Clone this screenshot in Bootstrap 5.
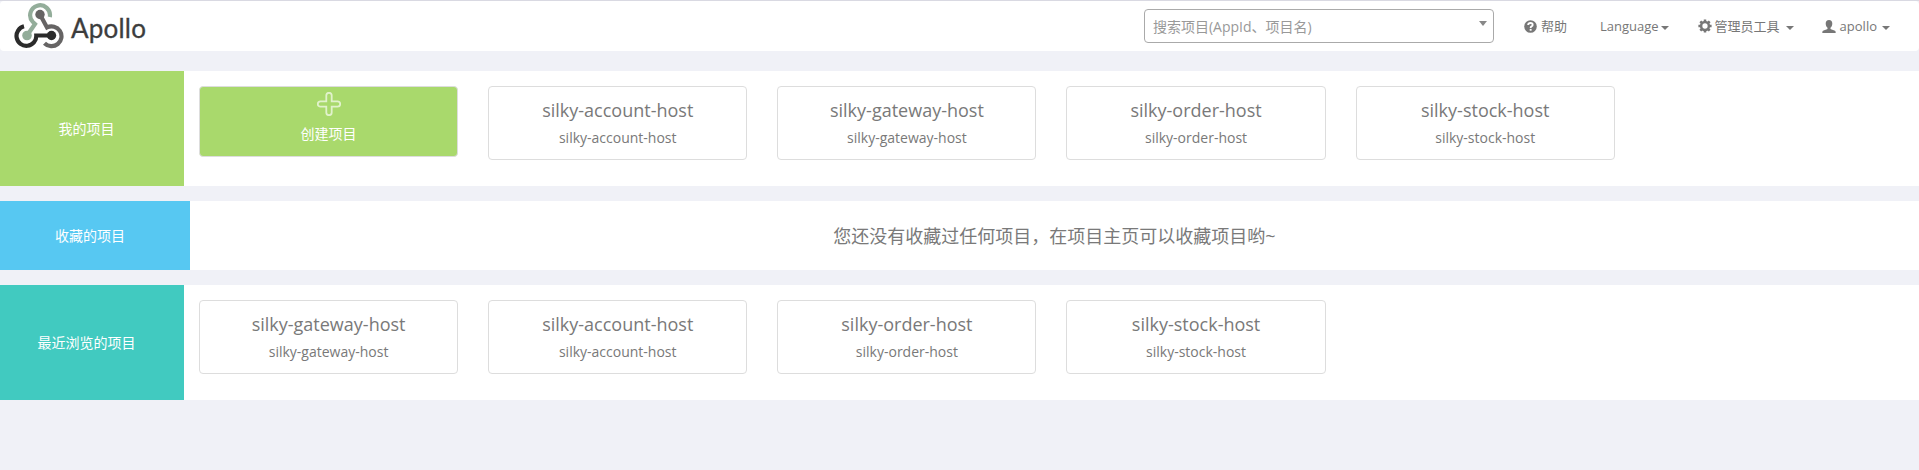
<!DOCTYPE html>
<html lang="zh-CN">
<head>
<meta charset="utf-8">
<title>Apollo</title>
<link rel="stylesheet" href="https://cdn.jsdelivr.net/npm/bootstrap@5.3.0/dist/css/bootstrap.min.css">
<style>
body{background:#f0f1f7;color:#797979;font-family:"Open Sans","Noto Sans CJK SC",sans-serif;font-size:14px;line-height:20px;overflow:hidden}
.topbar{height:51px;border-top:1px solid #d9d9e2;margin-bottom:20px}
.topbar-in{height:50px;background:#fff;border-radius:4px}
.brand-mark{width:50px;height:47px;margin-left:14px;margin-top:2px}
.brand-word{font-family:Lato,sans-serif;font-size:26px;line-height:50px;padding-top:2px;color:#3d3d3d;margin-left:7px;letter-spacing:.2px;-webkit-text-stroke:.3px #3d3d3d}
.search{width:350px;height:34px;border:1px solid #aaa;border-radius:4px;color:#999;padding:2px 6px 0 8px;margin:8px 30px 0 0}
.search-arrow{border:4px solid transparent;border-top:5px solid #888;border-bottom:0;margin-bottom:7px}
.menu{height:50px;padding-right:29px;color:#777}
.menu a{font-size:13px;color:#777;text-decoration:none;white-space:nowrap}
.menu .link-lang{margin-left:33px}
.menu .link-tools{margin-left:29px}
.menu .link-user{margin-left:28px}
.menu svg + span{margin-left:4px}
.menu .link-tools span{margin-left:3px}
.caret{display:inline-block;border:4px solid transparent;border-top-color:#777;border-bottom:0;margin:3px 0 0 6px}
.link-lang .caret{margin-left:2px}
.link-user .caret{margin-left:5px}
.panel-row{background:#fff;margin-bottom:15px;height:115px}
.panel-row.short{height:69px}
.side{width:184px;padding-right:11px;color:#fff}
.short .side{width:190px;padding-right:10px}
.green{background:#a9d96c}.blue{background:#57c8f2}.teal{background:#41cac0}
.app-grid{--bs-gutter-x:30px;margin:0}
.app-card{height:74px;border:1px solid #ddd;border-radius:4px;margin-top:15px;text-align:center}
.app-card h4{font-size:18px;line-height:20px;font-weight:400;margin:13px 0 8px}
.app-card.create{height:71px;color:#fff}
.create svg{display:block;margin:5px auto 8px}
.empty-note{font-size:18px}
</style>
<script src="https://cdn.jsdelivr.net/npm/bootstrap@5.3.0/dist/js/bootstrap.bundle.min.js"></script>
</head>
<body>
<header class="topbar"><nav class="topbar-in d-flex">
<svg class="brand-mark flex-shrink-0" viewBox="0 0 50 47" fill="none" stroke-width="4.2">
<path d="M35.800 14A9.900 9.900 0 1 0 18.800 18.900L21 21L13 32.500" stroke="#93ad9a"/><circle cx="13" cy="32.500" r="4.800" fill="#93ad9a"/>
<path d="M26 11.500L33 24.500A9.900 9.900 0 1 1 30.500 40.200" stroke="#666464"/><circle cx="26" cy="11.500" r="4.700" fill="#666464"/>
<path d="M10 23.300A9.900 9.900 0 1 0 22.300 32.500H37.500" stroke="#2b2b2b"/><circle cx="37.500" cy="32.500" r="4.700" fill="#2b2b2b"/>
</svg>
<span class="brand-word">Apollo</span>
<div class="menu d-flex ms-auto">
<div class="search d-flex align-items-center justify-content-between"><span>搜索项目(AppId、项目名)</span><i class="search-arrow"></i></div>
<a href="#" class="d-flex align-items-center"><svg width="13" height="13" viewBox="0 0 13 13"><circle cx="6.500" cy="6.500" r="6.300" fill="#777"/><path d="M4.100 5Q4.300 3 6.500 3T8.700 4.900Q8.700 5.800 7.500 6.400Q6.600 6.900 6.600 8" fill="none" stroke="#fff" stroke-width="1.800"/><path d="M5.700 8.900h1.900v1.800H5.700z" fill="#fff"/></svg><span>帮助</span></a>
<a href="#" class="link-lang d-flex align-items-center"><span>Language</span><i class="caret"></i></a>
<a href="#" class="link-tools d-flex align-items-center"><svg width="14" height="14" viewBox="0 0 14 14" fill="none" stroke="#777"><circle cx="7" cy="7" r="3.900" stroke-width="2.500"/><path d="M7 .4v2.400M7 11.200v2.400M.4 7h2.400M11.200 7h2.400M2.300 2.300L4 4M10 10l1.700 1.700M11.700 2.300L10 4M4 10l-1.700 1.700" stroke-width="2.500"/></svg><span>管理员工具</span><i class="caret"></i></a>
<a href="#" class="link-user d-flex align-items-center"><svg width="14" height="13" viewBox="0 0 14 13"><path d="M7 0C4.800 0 3.600 1.500 3.700 3.700C3.800 5.500 4.500 6.900 5.500 7.700V9C4.300 9.800 1.500 10.200.7 11Q.3 11.500.3 13H13.700Q13.700 11.500 13.300 11C12.500 10.200 9.700 9.800 8.500 9V7.700C9.500 6.900 10.200 5.500 10.300 3.700C10.400 1.500 9.200 0 7 0Z" fill="#777"/></svg><span>apollo</span><i class="caret"></i></a>
</div></nav></header>
<main>
<section class="panel-row d-flex">
<div class="side green flex-shrink-0 d-flex align-items-center justify-content-center">我的项目</div>
<div class="row app-grid flex-grow-1">
<div class="col-2"><div class="app-card create green"><svg width="24" height="24" viewBox="0 0 24 24" fill="none" stroke="#fff" stroke-opacity=".65" stroke-width="1.800"><path d="M9.300 9.300V3.500a2.700 2.700 0 0 1 5.400 0V9.300H20.500a2.700 2.700 0 0 1 0 5.400H14.700V20.500a2.700 2.700 0 0 1-5.400 0V14.700H3.500a2.700 2.700 0 0 1 0-5.400Z"/></svg>创建项目</div></div>
<div class="col-2"><div class="app-card"><h4>silky-account-host</h4>silky-account-host</div></div>
<div class="col-2"><div class="app-card"><h4>silky-gateway-host</h4>silky-gateway-host</div></div>
<div class="col-2"><div class="app-card"><h4>silky-order-host</h4>silky-order-host</div></div>
<div class="col-2"><div class="app-card"><h4>silky-stock-host</h4>silky-stock-host</div></div>
</div></section>
<section class="panel-row short d-flex">
<div class="side blue flex-shrink-0 d-flex align-items-center justify-content-center">收藏的项目</div>
<div class="empty-note flex-grow-1 d-flex align-items-center justify-content-center">您还没有收藏过任何项目，在项目主页可以收藏项目哟~</div>
</section>
<section class="panel-row d-flex">
<div class="side teal flex-shrink-0 d-flex align-items-center justify-content-center">最近浏览的项目</div>
<div class="row app-grid flex-grow-1">
<div class="col-2"><div class="app-card"><h4>silky-gateway-host</h4>silky-gateway-host</div></div>
<div class="col-2"><div class="app-card"><h4>silky-account-host</h4>silky-account-host</div></div>
<div class="col-2"><div class="app-card"><h4>silky-order-host</h4>silky-order-host</div></div>
<div class="col-2"><div class="app-card"><h4>silky-stock-host</h4>silky-stock-host</div></div>
</div></section>
</main>
</body></html>
